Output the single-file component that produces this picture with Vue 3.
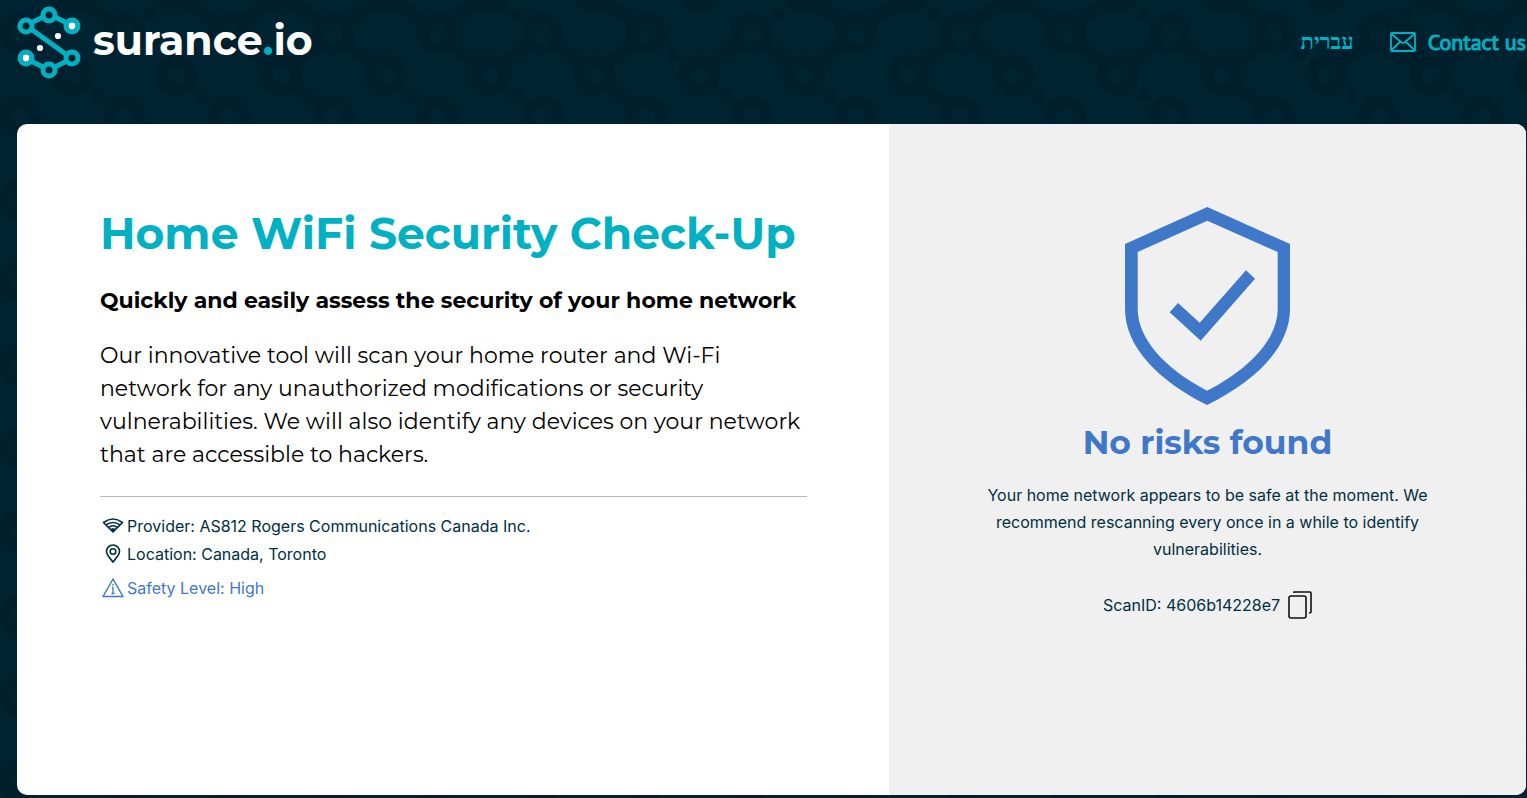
<script setup>
/* 배경 패턴 격자 간격 */
const STEP_X = 52.25;
const STEP_Y = 41.5;
const nodeX = (col) => 20 + col * STEP_X;
const nodeY = (row) => row * STEP_Y - 8;

/* 고리: 홀짝이 엇갈리는 격자 */
const rings = [];
for (let row = 0; row < 24; row++) {
  for (let col = (row + 1) % 2; col < 50; col += 2) {
    rings.push({ x: nodeX(col), y: nodeY(row) });
  }
}

/* 고리 사이 연결선 [열, 행, 열, 행] */
const links = [
  [0, 1, 1, 0], [1, 0, 2, 1], [3, 0, 4, 1], [4, 1, 5, 0], [5, 0, 6, 1],
  [4, 1, 5, 2], [5, 2, 6, 1], [5, 2, 6, 3], [7, 0, 6, 1], [7, 0, 8, 1],
  [9, 0, 8, 1], [6, 1, 7, 2], [8, 1, 9, 2], [9, 2, 10, 1], [10, 1, 11, 2],
  [11, 0, 12, 1], [11, 2, 12, 1], [11, 2, 12, 3], [13, 2, 14, 1], [14, 1, 15, 2],
  [15, 2, 16, 1], [15, 0, 16, 1], [16, 1, 17, 0], [17, 2, 18, 1], [17, 2, 18, 3],
  [18, 1, 19, 0], [18, 1, 19, 2], [19, 0, 20, 1], [20, 1, 21, 0], [20, 1, 21, 2],
  [21, 2, 22, 1], [22, 1, 23, 2], [23, 2, 24, 1], [23, 2, 24, 3], [23, 0, 24, 1],
  [25, 2, 26, 1], [27, 2, 28, 1], [27, 0, 28, 1], [28, 1, 29, 0],
  [0, 3, 1, 4], [0, 5, 1, 6], [0, 9, 1, 10], [0, 13, 1, 14]
];

/* 작은 점 좌표 */
const dots = [
  [151, 14], [307, 14], [517, 14], [778, 14], [935, 14], [1144, 14], [1405, 14],
  [673, 55], [1300, 55], [98, 96], [203, 96], [412, 96], [517, 96], [726, 96],
  [830, 96], [1039, 96], [1144, 96], [1352, 96], [1457, 96]
];

const scanId = '4606b14228e7';

/* 스캔 ID 복사 */
const copyScanId = () => {
  navigator.clipboard?.writeText(scanId);
};
</script>

<template>
  <div class="page">
    <!-- 배경 패턴 -->
    <svg class="pattern" aria-hidden="true">
      <line
        v-for="(l, i) in links"
        :key="'l' + i"
        :x1="nodeX(l[0])"
        :y1="nodeY(l[1])"
        :x2="nodeX(l[2])"
        :y2="nodeY(l[3])"
      />
      <circle v-for="(d, i) in dots" :key="'d' + i" class="dot" :cx="d[0]" :cy="d[1]" r="7" />
      <circle class="dot" cx="1405" cy="43" r="21" />
      <circle v-for="(r, i) in rings" :key="'r' + i" class="ring" :cx="r.x" :cy="r.y" r="15" />
    </svg>

    <!-- 헤더 -->
    <header class="header">
      <a class="logo" href="#">
        <svg width="64" height="74" viewBox="0 0 64 74" aria-hidden="true">
          <g fill="none" stroke="#00b1c3" stroke-width="5">
            <path d="M14 17 26 11M38 11l12 6M14 23l36 26M14 55l12 6M38 61l12-6" />
            <circle cx="32" cy="9" r="6" />
            <circle cx="9" cy="20" r="6" />
            <circle cx="55" cy="20" r="6" />
            <circle cx="9" cy="52" r="6" />
            <circle cx="55" cy="52" r="6" />
            <circle cx="32" cy="64" r="6" />
          </g>
          <g fill="#fff">
            <circle cx="55" cy="20" r="3.4" />
            <circle cx="9" cy="52" r="3.4" />
            <circle cx="41" cy="30" r="3.1" />
            <circle cx="23" cy="42" r="3.1" />
          </g>
        </svg>
        <span class="logo-text">surance<span class="logo-dot">.</span>io</span>
      </a>
      <nav class="nav">
        <a class="lang" href="#" lang="he">עברית</a>
        <a class="contact" href="#">
          <svg width="26" height="20" viewBox="0 0 26 20" fill="none" stroke="currentColor" stroke-width="1.8" aria-hidden="true">
            <rect x="1" y="1" width="24" height="18" rx="1" />
            <path d="M1.500 2l9.500 8q2 1.500 4 0l9.500-8M1.500 18l8.500-8M24.500 18 16 10" />
          </svg>
          <span>Contact us</span>
        </a>
      </nav>
    </header>

    <!-- 본문 카드 -->
    <main class="card">
      <section class="intro">
        <h1>Home WiFi Security Check-Up</h1>
        <h2>Quickly and easily assess the security of your home network</h2>
        <p class="lead">
          Our innovative tool will scan your home router and Wi-Fi network for any unauthorized
          modifications or security vulnerabilities. We will also identify any devices on your
          network that are accessible to hackers.
        </p>
        <ul class="details">
          <li>
            <svg width="22" height="20" viewBox="0 0 22 20" fill="none" stroke="currentColor" stroke-width="1.6" aria-hidden="true">
              <path d="M1.500 6.500Q11-.5 20.500 6.500L11 16z" stroke-linejoin="round" />
              <path d="M4 9q7-5 14 0M6.500 11.500q4.500-3.500 9 0" />
              <path d="M11 12l3 1-3 3-3-3z" fill="currentColor" stroke="none" />
            </svg>
            <span>Provider: AS812 Rogers Communications Canada Inc.</span>
          </li>
          <li>
            <svg width="22" height="20" viewBox="0 0 22 20" fill="none" stroke="currentColor" stroke-width="1.6" aria-hidden="true">
              <path d="M11 18C8 14 4.500 11 4.500 7.500a6.500 6.500 0 0 1 13 0c0 3.500-3.500 6.500-6.500 10.500z" />
              <circle cx="11" cy="7.500" r="2.800" />
            </svg>
            <span>Location: Canada, Toronto</span>
          </li>
          <li class="safety">
            <svg width="22" height="20" viewBox="0 0 22 20" fill="none" stroke="currentColor" stroke-width="1.5" aria-hidden="true">
              <path d="M11 1 1 18.500h20z" stroke-linejoin="round" />
              <path d="M9.800 9.500H11v6M9.500 15.500h3M11 6v1.700" stroke-width="1.3" />
            </svg>
            <span>Safety Level: High</span>
          </li>
        </ul>
      </section>

      <section class="result">
        <svg class="shield" width="165" height="198" viewBox="0 0 165 198" aria-hidden="true">
          <path
            fill-rule="evenodd"
            d="M82.300 0 165 37v65c0 37-32 71-83 96C32 173 0 139 0 102V37zM82.300 13.700 12.700 45v57c0 29 26 59 69.300 81.700C126 161 152.700 131 152.700 102V45z"
          />
          <path d="M53 96 74.700 115.700 121 63.300 130 71.700 75.700 133.700 44.700 105.300z" />
        </svg>
        <h2>No risks found</h2>
        <p>
          Your home network appears to be safe at the moment. We recommend rescanning every once in
          a while to identify vulnerabilities.
        </p>
        <div class="scan">
          <span>ScanID: {{ scanId }}</span>
          <button type="button" aria-label="Copy ScanID" @click="copyScanId">
            <svg width="24" height="28" viewBox="0 0 24 28" fill="none" stroke="currentColor" stroke-width="1.600" aria-hidden="true">
              <rect x="1" y="5" width="17" height="22" rx="2" />
              <path d="M6 2V1h16q1 0 1 1v19q0 1-2 1" />
            </svg>
          </button>
        </div>
      </section>
    </main>
  </div>
</template>

<style>
body {
  background-color: #002332;
}
</style>

<style scoped>
.page {
  position: relative;
  display: flex;
  flex-direction: column;
  min-height: 100vh;
  box-sizing: border-box;
  padding: 0 1px 3px 17px;
  overflow: hidden;
  background-color: #002332;
  color: #002f42;
  font-family: Inter, "Liberation Sans", sans-serif;
  font-size: 16px;
}

.pattern {
  position: absolute;
  top: 0;
  left: 0;
  width: 100%;
  height: 100%;
}

.pattern line {
  stroke: #001f2c;
  stroke-width: 13;
}

.pattern .ring {
  fill: #002332;
  stroke: #001f2c;
  stroke-width: 12;
}

.pattern .dot {
  fill: #001f2c;
}

.header {
  position: relative;
  display: flex;
  justify-content: space-between;
  align-items: flex-start;
  height: 124px;
}

.logo {
  display: flex;
  align-items: flex-start;
  gap: 12px;
  padding-top: 6px;
  color: #fff;
  text-decoration: none;
}

.logo-text {
  font-family: Montserrat, Inter, sans-serif;
  font-size: 41px;
  font-weight: 700;
  line-height: 68px;
}

.logo-dot {
  color: #00b1c3;
}

.nav {
  display: flex;
  align-items: center;
  gap: 36px;
  padding-top: 24px;
}

.nav a {
  color: #00b1c3;
  text-decoration: none;
}

.lang {
  font-family: "Liberation Serif", serif;
  font-size: 22px;
  font-weight: 700;
  line-height: 36px;
}

.contact {
  display: flex;
  align-items: center;
  gap: 12px;
  font-family: "PT Sans", "Open Sans", sans-serif;
  font-size: 22px;
  font-weight: 400;
  line-height: 36px;
  -webkit-text-stroke: 1px #00b1c3;
}

.card {
  position: relative;
  display: grid;
  grid-template-columns: 872fr 637fr;
  flex: 1;
  border-radius: 10px;
  overflow: hidden;
  background-color: #fff;
}

.intro {
  padding: 79px 82px 40px 83px;
}

.intro h1 {
  margin: 0;
  color: #00b1c3;
  font-family: Montserrat, Inter, sans-serif;
  font-size: 44px;
  font-weight: 700;
  line-height: 60px;
}

.intro h2 {
  margin: 21px 0 22px;
  color: #000;
  font-family: Montserrat, Inter, sans-serif;
  font-size: 22px;
  font-weight: 700;
  line-height: 33px;
}

.lead {
  margin: 0;
  padding-bottom: 25px;
  border-bottom: 1px solid #b8b8b8;
  color: #000;
  font-family: Montserrat, Inter, sans-serif;
  font-size: 22px;
  line-height: 33px;
}

.details {
  margin: 0;
  padding: 15px 0 0 2px;
  list-style: none;
}

.details li {
  display: flex;
  align-items: center;
  gap: 3px;
  line-height: 28px;
}

.details .safety {
  margin-top: 6px;
  color: #3f78c8;
}

.result {
  display: flex;
  flex-direction: column;
  align-items: center;
  padding: 83px 83px 40px;
  background-color: #f0f0f0;
  text-align: center;
}

.shield {
  fill: #3f78c8;
}

.result h2 {
  margin: 15px 0 18px;
  color: #3f78c8;
  font-family: Montserrat, Inter, sans-serif;
  font-size: 33px;
  font-weight: 700;
  line-height: 44px;
}

.result p {
  margin: 0;
  line-height: 27px;
}

.scan {
  display: flex;
  align-items: center;
  gap: 8px;
  margin-top: 28px;
}

.scan button {
  display: flex;
  padding: 0;
  border: none;
  background: none;
  color: #111;
  cursor: pointer;
}
</style>
